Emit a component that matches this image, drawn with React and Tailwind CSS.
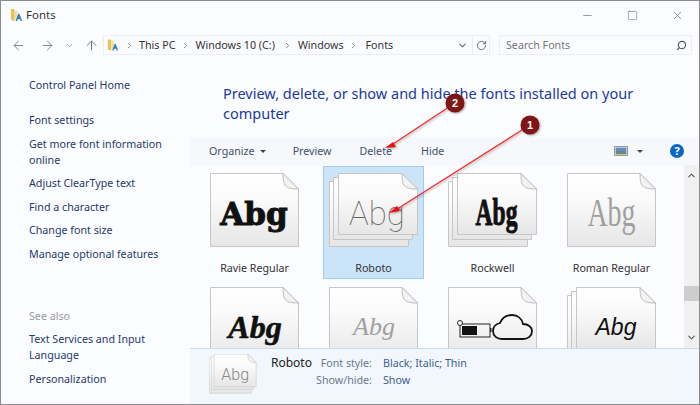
import React from "react";
import { ArrowLeft, ArrowRight, ArrowUp, ChevronDown, ChevronUp, ChevronRight, Search, RotateCw, Minus, Square, X } from "lucide-react";

const FolderA = ({ className }) => (
  <svg viewBox="0 0 14 15" className={className}>
    <path d="M1 1h3l1 1v12l-4-1z" fill="#e8c25c" />
    <path d="M5 3h3v9H5z" fill="#f6dd8e" />
    <path d="M6 14l3-8h1l3 8h-1.6l-.7-2H8.3l-.7 2z" fill="#2a7fd0" />
  </svg>
);

const Page = ({ x, y, w, h, id }) => {
  const f = 16;
  return (
    <g>
      <path d={`M${x + 0.5} ${y + 0.5}H${x + w - f}L${x + w - 0.5} ${y + f}V${y + h - 0.5}H${x + 0.5}Z`} fill={`url(#${id})`} stroke="#c6c6c6" />
      <path d={`M${x + w - f} ${y + 0.5}C${x + w - f} ${y + f - 3} ${x + w - f + 2} ${y + f} ${x + w - 0.5} ${y + f}Z`} fill="#f2f2f2" stroke="#bdbdbd" />
    </g>
  );
};

const FontIcon = ({ stacked, children, id, className = "w-[90px] h-[75px]" }) => (
  <svg viewBox="0 0 90 75" className={className}>
    <defs>
      <linearGradient id={id} x1="0" y1="0" x2="0" y2="1">
        <stop offset="0" stopColor="#ffffff" />
        <stop offset="0.35" stopColor="#fafafa" />
        <stop offset="1" stopColor="#e6e6e6" />
      </linearGradient>
    </defs>
    {stacked ? (
      <>
        <Page x={0} y={8} w={80} h={66} id={id} />
        <Page x={4} y={4} w={80} h={63} id={id} />
        <Page x={9} y={0} w={80} h={62} id={id} />
      </>
    ) : (
      <Page x={0} y={0} w={89} h={74} id={id} />
    )}
    {children}
  </svg>
);

const Tile = ({ label, selected, icon }) => (
  <div className={`flex h-[113px] w-[101px] flex-col items-center pt-[7px] ${selected ? "bg-[#cce4f8] outline outline-1 -outline-offset-1 outline-[#9fcdf2]" : ""}`}>
    {icon}
    {label && <div className="mt-[12px] leading-4 whitespace-nowrap text-[#333]">{label}</div>}
  </div>
);

const Link = ({ children }) => <div className="text-[#1f3a68]">{children}</div>;

export default function App() {
  return (
    <div className="relative flex h-[405px] w-[700px] flex-col overflow-hidden border border-[#8c8c8c] bg-[#fbfcff] font-['Noto_Sans',sans-serif] text-[10.7px] leading-4">
      {/* title bar */}
      <div className="flex h-[28px] shrink-0 items-center pl-[9px] pr-[15px]">
        <FolderA className="h-[14px] w-[13px]" />
        <span className="ml-[3px] text-[11.5px] text-[#333]">Fonts</span>
        <div className="ml-auto flex items-center gap-[33px] text-[#444]">
          <Minus size={13} strokeWidth={1} />
          <Square size={11} strokeWidth={1} />
          <X size={13} strokeWidth={1} />
        </div>
      </div>
      {/* nav bar */}
      <div className="mt-[6px] flex h-[20px] shrink-0 items-center pl-[10px] pr-[7px]">
        <ArrowLeft size={15} strokeWidth={1.6} className="text-[#888]" />
        <ArrowRight size={15} strokeWidth={1.6} className="ml-[14px] text-[#888]" />
        <ChevronDown size={9} strokeWidth={2} className="ml-[10px] text-[#888]" />
        <ArrowUp size={15} strokeWidth={1.6} className="ml-[10px] text-[#777]" />
        <div className="ml-[4px] flex h-[20px] w-[387px] items-center border border-[#eceef2] pl-[3px] text-[#333]">
          <FolderA className="h-[14px] w-[12px]" />
          <ChevronRight size={9} strokeWidth={2.5} className="ml-[6px] text-[#777]" />
          <span className="ml-[5px]">This PC</span>
          <ChevronRight size={9} strokeWidth={2.5} className="ml-[6px] text-[#777]" />
          <span className="ml-[5px]">Windows 10 (C:)</span>
          <ChevronRight size={9} strokeWidth={2.5} className="ml-[8px] text-[#777]" />
          <span className="ml-[6px]">Windows</span>
          <ChevronRight size={9} strokeWidth={2.5} className="ml-[5px] text-[#777]" />
          <span className="ml-[8px]">Fonts</span>
          <ChevronDown size={11} strokeWidth={2.2} className="ml-auto mr-[4px] text-[#666]" />
          <div className="flex h-full w-[17px] items-center justify-center border-l border-[#eceef2]">
            <RotateCw size={11} strokeWidth={2} className="text-[#666]" />
          </div>
        </div>
        <div className="ml-[9px] flex h-[20px] flex-1 items-center border border-[#eceef2] pl-[6px] pr-[4px] text-[#777]">
          <span>Search Fonts</span>
          <Search size={11} strokeWidth={2.4} className="ml-auto -scale-x-100 text-[#555]" />
        </div>
      </div>
      {/* body */}
      <div className="flex min-h-0 flex-1">
        <aside className="w-[189px] shrink-0 pl-[28px] pt-[22px]">
          <Link>Control Panel Home</Link>
          <div className="mt-[19px] flex flex-col gap-[7.5px]">
            <Link>Font settings</Link>
            <Link>Get more font information<br />online</Link>
            <Link>Adjust ClearType text</Link>
            <Link>Find a character</Link>
            <Link>Change font size</Link>
            <Link>Manage optional features</Link>
          </div>
          <div className="mt-[46px] text-[#9a9a9a]">See also</div>
          <div className="mt-[7.5px] flex flex-col gap-[7.5px]">
            <Link>Text Services and Input<br />Language</Link>
            <Link>Personalization</Link>
          </div>
        </aside>
        <main className="flex min-w-0 flex-1 flex-col">
          <h1 className="h-[82px] shrink-0 pl-[33px] pt-[28px] text-[14.5px] leading-[20px] text-[#1a3a9e]">
            Preview, delete, or show and hide the fonts installed on your<br />computer
          </h1>
          <div className="flex h-[28px] shrink-0 items-center bg-[#f6f8fb] pl-[19px] pr-[15px] text-[#3f516c]">
            <span>Organize</span>
            <span className="ml-[5px] h-0 w-0 border-x-[3px] border-t-[3px] border-x-transparent border-t-[#444]" />
            <span className="ml-[27px]">Preview</span>
            <span className="ml-[28px]">Delete</span>
            <span className="ml-[29px]">Hide</span>
            <svg viewBox="0 0 14 10" className="ml-auto h-[10px] w-[14px]">
              <rect x="0.5" y="0.5" width="13" height="9" fill="#fff" stroke="#999" />
              <rect x="1.5" y="1.5" width="11" height="3.5" fill="#5d8fc6" />
              <rect x="1.5" y="5" width="11" height="3.5" fill="#6f8a78" />
            </svg>
            <span className="ml-[9px] h-0 w-0 border-x-[3px] border-t-[3px] border-x-transparent border-t-[#444]" />
            <span className="ml-[27px] flex h-[14px] w-[14px] items-center justify-center rounded-full bg-[#0a68c4] text-[11px] font-bold text-white">?</span>
          </div>
          <div className="flex min-h-0 flex-1">
            <div className="min-h-0 flex-1 overflow-hidden pl-[14px] pt-px">
              <div className="grid grid-cols-[repeat(4,101px)] gap-x-[18px] gap-y-px">
                <Tile label="Ravie Regular" icon={
                  <FontIcon id="g1">
                    <text x="44" y="52" textAnchor="middle" className="font-['DejaVu_Serif',serif] text-[31px] font-bold" fill="#111" stroke="#111" strokeWidth="1">Abg</text>
                  </FontIcon>} />
                <Tile label="Roboto" selected icon={
                  <FontIcon id="g2" stacked>
                    <text x="48" y="52" textAnchor="middle" className="font-['Roboto',sans-serif] text-[33px] font-thin" fill="#666">Abg</text>
                  </FontIcon>} />
                <Tile label="Rockwell" icon={
                  <FontIcon id="g3" stacked>
                    <text x="0" y="0" transform="translate(48.5 52) scale(0.62 1)" textAnchor="middle" className="font-['Liberation_Serif',serif] text-[38px] font-bold" fill="#111" stroke="#111" strokeWidth="1">Abg</text>
                  </FontIcon>} />
                <Tile label="Roman Regular" icon={
                  <FontIcon id="g4">
                    <text x="0" y="0" transform="translate(44.5 53) scale(0.7 1)" textAnchor="middle" className="font-['Liberation_Serif',serif] text-[40px]" fill="#a0a0a0">Abg</text>
                  </FontIcon>} />
                <Tile icon={
                  <FontIcon id="g5">
                    <text x="45" y="51" textAnchor="middle" className="font-['Liberation_Serif',serif] text-[32px] font-bold italic" fill="#111" stroke="#111" strokeWidth="0.6">Abg</text>
                  </FontIcon>} />
                <Tile icon={
                  <FontIcon id="g6">
                    <text x="45" y="48" textAnchor="middle" className="font-['Liberation_Serif',serif] text-[26px] italic" fill="#a0a0a0">Abg</text>
                  </FontIcon>} />
                <Tile icon={
                  <FontIcon id="g7">
                    <rect x="12" y="37" width="30" height="13" fill="none" stroke="#222" strokeWidth="1" />
                    <rect x="14" y="39" width="15" height="9" fill="#111" />
                    <rect x="42" y="41" width="1.5" height="4" fill="#222" />
                    <circle cx="12" cy="36" r="2.5" fill="#fff" stroke="#222" strokeWidth="1" />
                    <path d="M54 52c-5 0-9-3-9-8 0-4 3-7 7-8 2-5 6-8 12-8 6 0 10 4 11 9 5 0 9 3 9 7 0 5-4 8-9 8z" fill="none" stroke="#111" strokeWidth="1.8" />
                  </FontIcon>} />
                <Tile icon={
                  <FontIcon id="g8" stacked>
                    <text x="49" y="48" textAnchor="middle" className="font-['Liberation_Sans',sans-serif] text-[23px] italic" fill="#111">Abg</text>
                  </FontIcon>} />
              </div>
            </div>
            <div className="flex w-[15px] shrink-0 flex-col items-center bg-[#f0f0f0] pt-[5px] text-[#555]">
              <ChevronUp size={11} strokeWidth={2.2} />
              <div className="mt-[105px] h-[15px] w-full bg-[#cdcdcd]" />
              <ChevronDown size={11} strokeWidth={2.2} className="mt-[31px]" />
            </div>
          </div>
          <div className="flex h-[56px] shrink-0 border-t border-[#c9dcee] bg-[#f1f7fc] pl-[19px]">
            <div className="mt-[5px]">
              <FontIcon id="g9" stacked className="h-[40px] w-[48px]">
                <text x="49" y="48" textAnchor="middle" className="font-['Roboto',sans-serif] text-[30px] font-light" fill="#888">Abg</text>
              </FontIcon>
            </div>
            <div className="ml-[14px] pt-[6px] text-[12px] leading-4 text-[#222]">Roboto</div>
            <div className="ml-[4px] grid grid-cols-[56px_auto] content-start gap-x-[11px] gap-y-[1px] pt-[6px]">
              <span className="text-right leading-4 text-[#6a7a90]">Font style:</span>
              <span className="leading-4 text-[#3f5e8c]">Black; Italic; Thin</span>
              <span className="text-right leading-4 text-[#6a7a90]">Show/hide:</span>
              <span className="leading-4 text-[#3f5e8c]">Show</span>
            </div>
          </div>
        </main>
      </div>
      {/* annotations */}
      <svg className="pointer-events-none absolute -left-px -top-px h-[405px] w-[700px]" viewBox="0 0 700 405">
        <defs>
          <filter id="sh" x="-30%" y="-30%" width="160%" height="160%">
            <feDropShadow dx="1" dy="1" stdDeviation="1" floodColor="#000" floodOpacity="0.35" />
          </filter>
        </defs>
        <g filter="url(#sh)">
          <line x1="530" y1="125" x2="394" y2="211" stroke="#ee2a2a" strokeWidth="1.2" />
          <path d="M389 213l8-7 3 5z" fill="#ee1111" />
          <line x1="455" y1="103" x2="390" y2="146" stroke="#ee2a2a" strokeWidth="1.2" />
          <path d="M385 148l8-6 3 5z" fill="#ee1111" />
          <circle cx="530" cy="125" r="9.5" fill="#7f1212" />
          <circle cx="455" cy="103" r="9.5" fill="#7f1212" />
        </g>
        <text x="530" y="129" textAnchor="middle" className="font-['Liberation_Sans',sans-serif] text-[11px] font-bold" fill="#fff">1</text>
        <text x="455" y="107" textAnchor="middle" className="font-['Liberation_Sans',sans-serif] text-[11px] font-bold" fill="#fff">2</text>
      </svg>
    </div>
  );
}
